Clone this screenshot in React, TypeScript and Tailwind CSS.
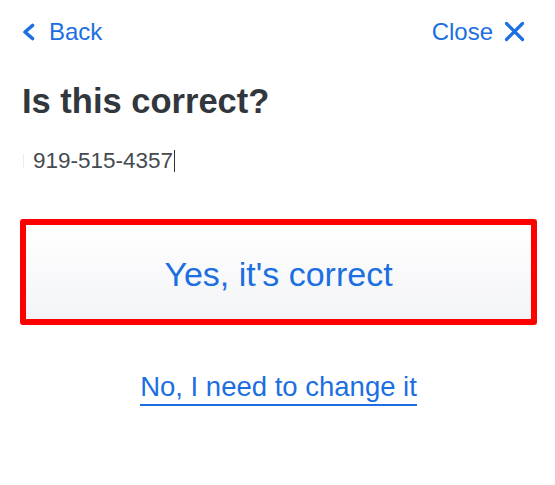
import React from "react";

export default function App() {
  return (
    <div
      className="w-[555px] h-[485px] bg-white relative overflow-hidden"
      style={{ fontFamily: '"Liberation Sans", Arial, sans-serif' }}
    >
      <div className="flex items-center justify-between pl-[21px] pr-[30px] pt-[17px] h-[46px]">
        <div className="flex items-center gap-[13px] text-[24px] leading-none text-[#1c6fe0]">
          <svg width="15" height="18" viewBox="0 0 15 18" fill="none">
            <path d="M11.5 2.5 L4 9 L11.5 15.5" stroke="#1c6fe0" strokeWidth="3.6" strokeLinecap="round" strokeLinejoin="round" />
          </svg>
          <span>Back</span>
        </div>
        <div className="flex items-center gap-[11px] text-[24px] leading-none text-[#1c6fe0]">
          <span>Close</span>
          <svg width="21" height="21" viewBox="0 0 21 21" fill="none">
            <path d="M2.5 2.5 L18.5 18.5 M18.5 2.5 L2.5 18.5" stroke="#1c6fe0" strokeWidth="3.2" strokeLinecap="round" />
          </svg>
        </div>
      </div>

      <h1 className="pl-[22px] mt-[35px] text-[34.5px] leading-[40px] font-bold text-[#31373c]">
        Is this correct?
      </h1>

      <div className="relative pl-[33px] mt-[25px] h-[30px] flex items-center">
        <span className="absolute left-[23px] top-[8px] w-px h-[14px] bg-[#ececec]" />
        <span className="text-[22.5px] leading-none text-[#444a50]">919-515-4357</span>
        <span className="ml-[1px] w-px h-[22px] bg-[#333]" />
      </div>

      <div className="px-[18px] mt-[43px]">
        <button className="w-[517px] h-[106px] ml-[2px] border-[6px] border-[#ff0000] rounded-[3px] bg-gradient-to-b from-[#ffffff] to-[#f3f4f7] flex items-center justify-center pt-[3px]">
          <span className="text-[34px] leading-none text-[#1c6fe0]">Yes, it's correct</span>
        </button>
      </div>

      <div className="flex justify-center mt-[46px] pl-[2px]">
        <span className="text-[27.5px] leading-[32px] text-[#1c6fe0] border-b-[2px] border-[#1c6fe0] pb-[1px]">
          No, I need to change it
        </span>
      </div>
    </div>
  );
}
